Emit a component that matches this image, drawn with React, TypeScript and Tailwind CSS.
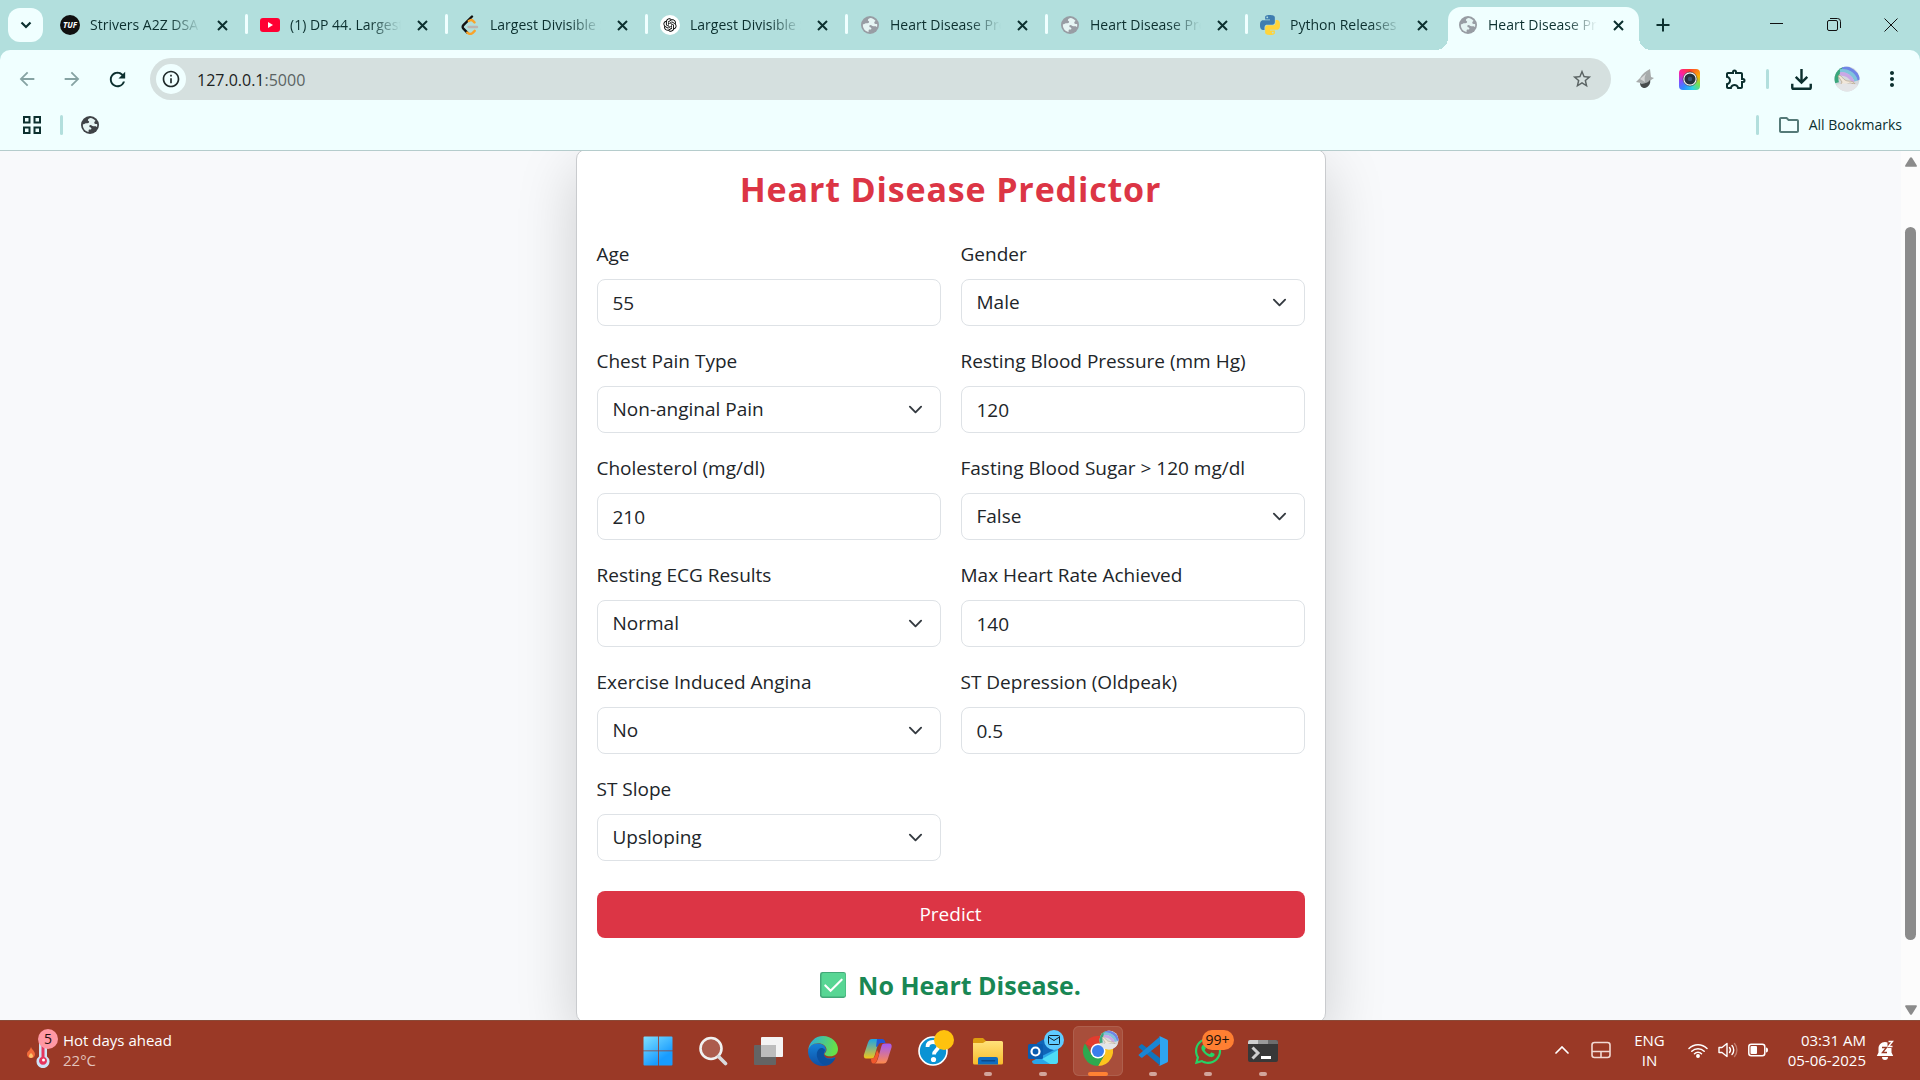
import React from "react";
import { MdOutlineExtension, MdArrowBack, MdArrowForward, MdRefresh, MdOutlineInfo, MdStarBorder, MdOutlineFolder, MdMoreVert } from "react-icons/md";
import { RiOpenaiFill } from "react-icons/ri";
import { FaWhatsapp } from "react-icons/fa";

type IconProps = { className?: string };

function Globe({ className = "" }: IconProps) {
  return (
    <svg viewBox="0 0 18 18" className={className} aria-hidden="true">
      <circle cx="9" cy="9" r="9" fill="currentColor" />
      <path
        className="fill-[#e6f5f4]"
        d="M9.6 1.9c-1 .3-3 1.200-2.700 2.300.2.700 1 .6 1.200 1.400.2.900-.6 1.700-1.700 1.700H4.700c-.9 0-1 .9-1.900.9h-.9c-.3 2.600.7 4.900 2.700 6.500.9.600 1.900 1.100 3 1.300v-1.600c0-.5.5-.8 1-.8h.8c.9 0 1.300-1.100.8-1.700-.6-.7-1.200-.5-1.700-1.200-.6-.9.100-1.700 1.100-1.700 1.200 0 1.500 1.300 2.800 1.300h1.900c.9 0 1 .8 1.700.7.3-.9.300-1.900.1-2.900h-1.500c-1 0-1.400-.8-1.300-1.500.1-.8.800-1.300 1.200-1.900-1.300-1.500-3-2.500-4.900-2.800z"
      />
    </svg>
  );
}

function PythonIcon() {
  const half =
    "M14.25.18l.9.2.73.26.59.3.45.32.34.34.25.34.16.33.1.3.04.26.02.2-.01.13V8.5l-.05.63-.13.55-.21.46-.26.38-.3.31-.33.25-.35.19-.35.14-.33.1-.3.07-.26.04-.21.02H8.77l-.69.05-.59.14-.5.22-.41.27-.33.32-.27.35-.2.36-.15.37-.1.35-.07.32-.04.27-.02.21v3.06H3.17l-.21-.03-.28-.07-.32-.12-.35-.18-.36-.26-.36-.36-.35-.46-.32-.59-.28-.73-.21-.88-.14-1.05-.05-1.23.06-1.22.16-1.04.24-.87.32-.71.36-.57.4-.44.42-.33.42-.24.4-.16.36-.1.32-.05.24-.01h.16l.06.01h8.16v-.83H6.18l-.01-2.75-.02-.37.05-.34.11-.31.17-.28.25-.26.31-.23.38-.2.44-.18.51-.15.58-.12.64-.1.71-.06.77-.04.84-.02 1.27.05zm-6.3 1.98l-.23.33-.08.41.08.41.23.34.33.22.41.09.41-.09.33-.22.23-.34.08-.41-.08-.41-.23-.33-.33-.22-.41-.09-.41.09z";
  return (
    <svg viewBox="0 0 24 24" className="size-5" aria-hidden="true">
      <path d={half} fill="#3f7db0" />
      <path d={half} fill="#ffd43b" transform="rotate(180 12 12)" />
    </svg>
  );
}

function LeetCodeIcon() {
  return (
    <svg viewBox="0 0 20 20" className="size-5" fill="none" strokeLinecap="round" strokeLinejoin="round" strokeWidth="2.400" aria-hidden="true">
      <path d="M12 1.500 3.400 10.200c-1 1-1 2.400 0 3.400l3.900 4" stroke="#111" />
      <path d="m8.800 6 1.500-.8c1-.3 2 0 2.700.7l1.500 1.500M7.300 17.600c1.800 1.500 4 1.500 5.400.2l2-2" stroke="#f9a42b" />
      <path d="M8.500 12H17" stroke="#bdb5b1" />
    </svg>
  );
}

function TufIcon() {
  return (
    <span className="flex size-5 items-center justify-center rounded-full bg-[#101010] text-[8px] leading-none font-bold text-white italic">
      TUF
    </span>
  );
}

function YoutubeIcon() {
  return (
    <svg viewBox="0 0 20 20" className="size-5" aria-hidden="true">
      <rect y="3" width="20" height="14" rx="3" fill="#ff0033" />
      <path d="m8 7 5 3-5 3z" fill="#fff" />
    </svg>
  );
}

function OpenAiIcon() {
  return (
    <span className="flex size-5 items-center justify-center rounded-full bg-white text-black">
      <RiOpenaiFill className="size-4" />
    </span>
  );
}

const pageGlobe = <Globe className="size-[18px] text-[#989da4]" />;

const tabs = [
  { title: "Strivers A2Z DSA Course", icon: <TufIcon /> },
  { title: "(1) DP 44. Largest Divisible", icon: <YoutubeIcon /> },
  { title: "Largest Divisible Subset", icon: <LeetCodeIcon /> },
  { title: "Largest Divisible Subset", icon: <OpenAiIcon /> },
  { title: "Heart Disease Predictor", icon: pageGlobe },
  { title: "Heart Disease Predictor", icon: pageGlobe },
  { title: "Python Releases for", icon: <PythonIcon /> },
  { title: "Heart Disease Predictor", icon: pageGlobe, active: true },
];

function TabStrip() {
  return (
    <div className="flex h-[50px] items-start bg-[#b2dfdd] text-[#0c302f]">
      <button aria-label="Search tabs" className="mt-2 ml-2 flex h-[34px] w-[35px] items-center justify-center rounded-xl bg-[#f0ffff]">
        <svg viewBox="0 0 12 12" className="size-3" fill="none" stroke="currentColor" strokeWidth="2.200" aria-hidden="true">
          <path d="m1.500 3.500 4.500 4.500 4.500-4.500" />
        </svg>
      </button>
      <div className="ml-[5px] flex min-w-0" role="tablist">
        {tabs.map((tab, i) => (
          <div
            key={i}
            role="tab"
            aria-selected={!!tab.active}
            className={
              tab.active
                ? "relative mt-[7px] flex h-[43px] w-[191px] items-center rounded-t-[13px] bg-[#f0ffff] pr-3 pb-[7px] pl-[10px]"
                : "relative mt-[7px] flex h-[43px] w-[200px] items-center pr-[17px] pb-[7px] pl-3"
            }
          >
            <span className="flex w-5 shrink-0 justify-center">{tab.icon}</span>
            <span className="ml-[10px] flex-1 overflow-hidden text-sm whitespace-nowrap [mask-image:linear-gradient(to_right,#000_72%,transparent)]">
              {tab.title}
            </span>
            <button aria-label={"Close " + tab.title} className="ml-[13px] flex w-[17px] shrink-0 justify-center">
              <svg viewBox="0 0 11 11" className="size-[11px]" stroke="currentColor" strokeWidth="2" aria-hidden="true">
                <path d="m1 1 9 9m0-9-9 9" />
              </svg>
            </button>
            {!tab.active && i < 6 && <span className="absolute top-[7px] right-0 h-5 w-[3px] rounded bg-[#f0ffff]" />}
            {tab.active && (
              <>
                <span className="absolute bottom-0 -left-3 size-3 bg-[radial-gradient(circle_at_0_0,transparent_12px,#f0ffff_12px)]" />
                <span className="absolute -right-3 bottom-0 size-3 bg-[radial-gradient(circle_at_100%_0,transparent_12px,#f0ffff_12px)]" />
              </>
            )}
          </div>
        ))}
      </div>
      <button aria-label="New tab" className="mt-[18px] ml-[17px]">
        <svg viewBox="0 0 14 14" className="size-[14px]" stroke="currentColor" strokeWidth="2" aria-hidden="true">
          <path d="M7 .500v13M.500 7h13" />
        </svg>
      </button>
      <div className="mt-[15px] mr-[22px] ml-auto flex items-center gap-[43px] text-[#111]">
        <button aria-label="Minimize">
          <svg viewBox="0 0 14 20" className="h-5 w-[14px]" aria-hidden="true"><path d="M0 8.500h13" stroke="currentColor" /></svg>
        </button>
        <button aria-label="Restore">
          <svg viewBox="0 0 14 20" className="h-5 w-[14px]" fill="none" stroke="currentColor" aria-hidden="true">
            <rect x=".5" y="5.500" width="10" height="10" rx="1.500" />
            <path d="M3 3.500h7.500a3 3 0 0 1 3 3V13" />
          </svg>
        </button>
        <button aria-label="Close window">
          <svg viewBox="0 0 14 20" className="h-5 w-[14px]" stroke="currentColor" aria-hidden="true"><path d="m.5 3.500 13 13m0-13-13 13" /></svg>
        </button>
      </div>
    </div>
  );
}

function Avatar({ className = "" }: IconProps) {
  return (
    <svg viewBox="0 0 26 26" className={className} aria-hidden="true">
      <clipPath id="avatarClip"><circle cx="13" cy="13" r="12.500" /></clipPath>
      <g clipPath="url(#avatarClip)">
        <rect width="26" height="26" fill="#d5d9de" />
        <g fill="none" strokeWidth="3.600">
          <path d="M2 17C0 9 4 4 9 2" stroke="#3aa77c" strokeWidth="6" />
          <path d="M8 2a16 16 0 0 1 17 12" stroke="#6f86e6" />
          <path d="M6 5a14 14 0 0 1 16 10" stroke="#7fc4dc" />
          <path d="M6 8a12 12 0 0 1 13 8" stroke="#c9a8e6" />
        </g>
        <path d="M4 10c3-2 4 2 7 4s8 0 10 4l-5-1-5 2-5 1 2-4z" fill="#f1e7da" stroke="#b9a992" strokeWidth=".8" />
        <path d="M2 19c6-2 15-2 22 0v7H2z" fill="#e4e5e7" />
      </g>
    </svg>
  );
}

function Toolbar() {
  return (
    <div className="bg-[#b2dfdd]">
      <div className="flex h-[100px] flex-col rounded-t-[10px] bg-[#f0ffff] text-[#0c302f]">
        <div className="mt-2 flex h-[42px] items-center">
          <div className="ml-4 flex items-center gap-[23px]">
            <button aria-label="Back" className="text-[#86a3a3]"><MdArrowBack className="size-[22px]" /></button>
            <button aria-label="Forward" className="text-[#86a3a3]"><MdArrowForward className="size-[22px]" /></button>
            <button aria-label="Reload"><MdRefresh className="size-[23px]" /></button>
          </div>
          <div className="ml-[21px] flex h-[42px] flex-1 items-center rounded-full bg-[#d5e0df] pr-[18px] pl-[6px]">
            <button aria-label="View site information" className="flex size-[30px] items-center justify-center rounded-full bg-[#f0ffff] text-[#1f2a2a]">
              <MdOutlineInfo className="size-5" />
            </button>
            <span className="ml-[11px] flex-1 pt-px font-['Open_Sans'] text-base text-[#1c2222]">
              127.0.0.1<span className="text-[#5a6363]">:5000</span>
            </span>
            <button aria-label="Bookmark this tab" className="text-[#5b6464]"><MdStarBorder className="size-[22px]" /></button>
          </div>
          <div className="mr-4 ml-6 flex items-center">
            <button aria-label="Extension one">
              <svg viewBox="0 0 20 20" className="size-5" aria-hidden="true">
                <path d="M15 0c-4 2-8 5-10 9l-4 4 5 1c3 1 8 0 10-3l3-2-3-1z" fill="#a7abab" />
                <path d="M13 3c-3 2-4 6-3 10l-5-3z" fill="#d5d7d7" />
                <path d="M5 14c2 1 7 1 10-3 1 3-1 7-5 8-3 0-5-2-5-5z" fill="#474b4b" />
              </svg>
            </button>
            <button aria-label="Extension two" className="ml-6">
              <span className="flex size-[21px] items-center justify-center rounded bg-[conic-gradient(#ff3b30,#ffb300_20%,#7be04a_32%,#2ad4e8_45%,#2f8bff_60%,#8a4bff_72%,#ff1fa0_85%,#ff3b30)]">
                <svg viewBox="0 0 16 16" className="size-4" aria-hidden="true">
                  <circle cx="8" cy="8" r="7" fill="#fff" stroke="#222c38" strokeWidth=".6" />
                  <circle cx="8" cy="8" r="5.600" fill="#26303c" />
                  <circle cx="8" cy="8" r="2.200" fill="#3b5675" />
                </svg>
              </span>
            </button>
            <button aria-label="Extensions" className="ml-6"><MdOutlineExtension className="size-6" /></button>
            <span className="ml-[18px] h-5 w-[3px] rounded bg-[#b2dfdd]" />
            <button aria-label="Downloads" className="ml-[22px]">
              <svg viewBox="0 0 20 20" className="size-[21px]" fill="none" stroke="currentColor" strokeWidth="2.300" aria-hidden="true">
                <path d="M10 0v12.500M4.500 7.500l5.500 5.500 5.500-5.500M1.200 14v3.500c0 .8.500 1.300 1.300 1.300h15c.8 0 1.300-.5 1.300-1.300V14" />
              </svg>
            </button>
            <button aria-label="Profile" className="ml-[22px]"><Avatar className="size-[26px]" /></button>
            <button aria-label="Menu" className="ml-5"><MdMoreVert className="size-6" /></button>
          </div>
        </div>
        <div className="flex h-[49px] items-center">
          <button aria-label="Apps" className="ml-[23px]">
            <svg viewBox="0 0 18 18" className="size-[18px]" fill="none" stroke="currentColor" strokeWidth="2" aria-hidden="true">
              <rect x="1" y="1" width="5.500" height="5.500" /><rect x="11.500" y="1" width="5.500" height="5.500" />
              <rect x="1" y="11.500" width="5.500" height="5.500" /><rect x="11.500" y="11.500" width="5.500" height="5.500" />
            </svg>
          </button>
          <span className="ml-[19px] h-5 w-[3px] rounded bg-[#b2dfdd]" />
          <button aria-label="Bookmark" className="ml-[18px]"><Globe className="size-[18px] text-[#3f4347]" /></button>
          <span className="ml-auto h-5 w-[3px] rounded bg-[#b2dfdd]" />
          <button className="mr-[18px] ml-[18px] flex items-center gap-2 text-sm">
            <MdOutlineFolder className="size-6 text-[#557a78]" />
            All Bookmarks
          </button>
        </div>
      </div>
    </div>
  );
}

type Field = { id: string; label: string; value: string; options?: string[] };

const fields: Field[] = [
  { id: "age", label: "Age", value: "55" },
  { id: "sex", label: "Gender", value: "Male", options: ["Male", "Female"] },
  { id: "cp", label: "Chest Pain Type", value: "Non-anginal Pain", options: ["Typical Angina", "Atypical Angina", "Non-anginal Pain", "Asymptomatic"] },
  { id: "trestbps", label: "Resting Blood Pressure (mm Hg)", value: "120" },
  { id: "chol", label: "Cholesterol (mg/dl)", value: "210" },
  { id: "fbs", label: "Fasting Blood Sugar > 120 mg/dl", value: "False", options: ["False", "True"] },
  { id: "restecg", label: "Resting ECG Results", value: "Normal", options: ["Normal", "ST-T Abnormality"] },
  { id: "thalach", label: "Max Heart Rate Achieved", value: "140" },
  { id: "exang", label: "Exercise Induced Angina", value: "No", options: ["No", "Yes"] },
  { id: "oldpeak", label: "ST Depression (Oldpeak)", value: "0.5" },
  { id: "slope", label: "ST Slope", value: "Upsloping", options: ["Upsloping", "Flat", "Downsloping"] },
];

function FormField({ id, label, value, options }: Field) {
  const box = "block h-[47px] w-full appearance-none rounded-lg border border-[#dee2e6] bg-white px-[15px]";
  return (
    <div>
      <label htmlFor={id} className="mb-[10px] block leading-[30px]">{label}</label>
      {options ? (
        <div className="relative">
          <select id={id} defaultValue={value} className={box}>
            {options.map((o) => <option key={o}>{o}</option>)}
          </select>
          <svg viewBox="0 0 16 16" className="pointer-events-none absolute top-4 right-[18px] size-[15px]" fill="none" stroke="#343a40" strokeWidth="2" strokeLinecap="round" strokeLinejoin="round" aria-hidden="true">
            <path d="m2 5 6 6 6-6" />
          </svg>
        </div>
      ) : (
        <input id={id} defaultValue={value} className={box} />
      )}
    </div>
  );
}

function Page() {
  return (
    <main className="flex min-h-0 flex-1 border-t border-[#b5cccc] bg-[#f8f9fb]">
      <div className="min-w-0 flex-1 overflow-hidden">
        <form
          onSubmit={(e) => e.preventDefault()}
          className="mx-auto -mt-0.5 max-w-[750px] rounded-[10px] border border-[#c9cbce] bg-white px-5 pt-5 pb-[22px] font-['Open_Sans'] text-[19px] text-[#212529] shadow-[0_20px_60px_rgba(0,0,0,0.175)]"
        >
          <h1 className="mb-[31px] text-center text-[34px] leading-[38px] font-bold tracking-wide text-[#dc3545]">Heart Disease Predictor</h1>
          <div className="grid grid-cols-2 gap-5">
            {fields.map((f) => <FormField key={f.id} {...f} />)}
          </div>
          <button className="mt-[30px] block h-[47px] w-full rounded-lg bg-[#dc3545] text-white">Predict</button>
          <p className="mt-8 flex items-center justify-center gap-3 text-[25px] leading-[30px] font-bold text-[#198754]">
            <svg viewBox="0 0 27 27" className="size-[26px]" aria-hidden="true">
              <rect width="27" height="27" rx="2.500" fill="#43a878" />
              <rect x="1.500" y="1" width="25" height="24.500" rx="2" fill="#58d694" />
              <path d="m5.500 14 5.500 5.500L22.500 8" fill="none" stroke="#fff" strokeWidth="2.200" strokeLinecap="round" />
            </svg>
            No Heart Disease.
          </p>
        </form>
      </div>
      <div className="flex w-[19px] flex-col items-center bg-[#fcfcfc] pt-1.5 pb-[5px]" aria-hidden="true">
        <svg viewBox="0 0 12 10" className="h-[10px] w-3" fill="#8b8b8b"><path d="M5 .8c.5-.8 1.500-.8 2 0l4.700 7.400c.5.900.1 1.600-.9 1.600H1.200c-1 0-1.400-.7-.9-1.600z" /></svg>
        <span className="mt-[60px] mb-[65px] w-[11px] flex-1 rounded-full bg-[#8b8b8b]" />
        <svg viewBox="0 0 12 10" className="h-[10px] w-3 rotate-180" fill="#8b8b8b"><path d="M5 .8c.5-.8 1.500-.8 2 0l4.700 7.400c.5.900.1 1.600-.9 1.600H1.200c-1 0-1.400-.7-.9-1.600z" /></svg>
      </div>
    </main>
  );
}

function Gradient({ id, from, to, angle = 90 }: { id: string; from: string; to: string; angle?: number }) {
  return (
    <linearGradient id={id} gradientTransform={`rotate(${angle})`}>
      <stop stopColor={from} />
      <stop offset="1" stopColor={to} />
    </linearGradient>
  );
}

const apps: { name: string; running?: boolean; active?: boolean; icon: React.ReactNode; badge?: React.ReactNode }[] = [
  {
    name: "Start",
    icon: (
      <>
        <Gradient id="gWin" from="#7fe0ff" to="#189cff" angle={55} />
        <path fill="url(#gWin)" d="M1.500.5h13.700v14H.5v-13a1 1 0 0 1 1-1zM16 .5h12.500a1 1 0 0 1 1 1v13H16zM.5 15.300h14.700v14.200H1.500a1 1 0 0 1-1-1zM16 15.300h13.500v13.200a1 1 0 0 1-1 1H16z" />
      </>
    ),
  },
  {
    name: "Search",
    icon: (
      <>
        <circle cx="13" cy="12.500" r="10.500" fill="#fff" fillOpacity=".18" stroke="#f1f1f1" strokeWidth="2.600" />
        <path d="m20.500 20.500 7 7" stroke="#d9dadd" strokeWidth="3.600" strokeLinecap="round" />
      </>
    ),
  },
  {
    name: "Task View",
    icon: (
      <>
        <rect x="1" y="9" width="22" height="20" rx="1" fill="#646464" />
        <rect x="8" y="1" width="22" height="20" rx="1" fill="#f4f4f4" />
        <path d="M8 9h15v12H8z" fill="#bdbdbd" />
      </>
    ),
  },
  {
    name: "Edge",
    icon: (
      <>
        <Gradient id="gEdge" from="#26a8e8" to="#66e04a" angle={12} />
        <Gradient id="gEdgeB" from="#1582d8" to="#0f4fa4" />
        <path fill="url(#gEdgeB)" d="M0 15C1 9 6 7 11 7.500c4 .4 7 3 7 6.500 0 2-2 2.500-2 4.500 0 3 4 4.500 8 3.500 1.500-.4 2.600-1 3-.8.500.4 0 1.200-.5 2A15 15 0 0 1 15 30C7 30 0 24 0 15z" />
        <path fill="#0b4f9e" d="M11 13c-3 3-3 8 0 12 2 3 5 4.500 8 4.400 4-1 7-4 8.400-7.500-5 2.500-10 1-11.400-2.400-.9-2.400.7-4 1-5.500-2-2.500-4-2.500-6-1z" />
        <path fill="url(#gEdge)" d="M0 15C1 6 7 0 15 0c9 0 15 7 15 13 0 5-3.500 7.300-7.500 7.300-3 0-6-.9-6-2.300 0-1 2-1.500 2-4.500 0-3.600-4-6.300-8.500-6.300C5 7.200 1 10 0 15z" />
      </>
    ),
  },
  {
    name: "Copilot",
    icon: (
      <>
        <Gradient id="gCopA" from="#1aa5e8" to="#f3c518" />
        <Gradient id="gCopB" from="#a259f7" to="#ff8a4c" />
        <path fill="url(#gCopA)" d="M9 3h10c-2 0-3 2-4 5l-3.500 12c-.6 2-1.500 2.500-3 2.500H3c-2 0-2.500-2-2-4L5 6.500C6 4 7 3 9 3z" />
        <path fill="#2156d8" d="M14 3h5c2 0 3 1.500 3.500 4h-4c-2 0-3 1-3.500 3l-2 1z" />
        <path fill="url(#gCopB)" d="M21.500 7.500H26c2.500 0 3 2 2.500 4l-4 12.500c-1 2.500-2 3.500-4 3.500H11c2 0 3-2 4-5l3.500-12.500c.5-1.700 1.500-2.500 3-2.500z" />
        <path fill="#f1582c" d="M8 22.500h1c1.500 0 2.500-1 3-2.500l2-6 2 4-2 6c-.8 2-1.500 3.500-3.500 3.500S8 25.500 8 22.500z" />
      </>
    ),
  },
  {
    name: "Get Help",
    icon: (
      <>
        <circle cx="15" cy="15" r="14" fill="#0a93d4" stroke="#fff" strokeWidth="1.600" />
        <path d="M9.500 11c0-3.500 2.500-5 5.500-5s5.500 1.800 5.500 4.500c0 3.500-4.500 4-4.500 8" fill="none" stroke="#fff" strokeWidth="3.800" />
        <circle cx="15.500" cy="23.500" r="2.600" fill="#fff" />
      </>
    ),
    badge: <span className="block size-5 rounded-full bg-[#ffc20e]" />,
  },
  {
    name: "File Explorer",
    running: true,
    icon: (
      <>
        <Gradient id="gFold" from="#ffe27a" to="#f8bc2c" />
        <path fill="#dd9c0f" d="M0 4a2 2 0 0 1 2-2h8l3 3v4H0z" />
        <path fill="url(#gFold)" d="M0 7h10l3-2h15.500A1.500 1.500 0 0 1 30 6.500V27a1.500 1.500 0 0 1-1.500 1.500h-27A1.500 1.500 0 0 1 0 27z" />
        <path fill="#0f6cc0" d="M5 28.500V23a2 2 0 0 1 2-2h16a2 2 0 0 1 2 2v5.500z" />
        <path d="M9 24.700h12.500" stroke="#0b4a8c" strokeWidth="1.600" strokeLinecap="round" />
      </>
    ),
  },
  {
    name: "Outlook",
    running: true,
    icon: (
      <>
        <path fill="#1066b8" d="M9 7 20 1l10 7v9L17 25 6 20z" />
        <path fill="#2ba6e8" d="M30 12v13a3 3 0 0 1-3 3H7a3 3 0 0 1-3-3z" />
        <path fill="#4fdcf7" d="m30 14-16 9 8 5h5a3 3 0 0 0 3-3z" />
        <rect y="8" width="15" height="15" rx="1.500" fill="#0a5cb0" />
        <circle cx="7.500" cy="15.500" r="4" fill="none" stroke="#fff" strokeWidth="2.200" />
      </>
    ),
    badge: (
      <span className="flex size-5 items-center justify-center rounded-full bg-[#5fcbff]">
        <svg viewBox="0 0 12 10" className="h-[10px] w-3" fill="none" stroke="#13202b" aria-hidden="true">
          <rect x=".5" y=".5" width="11" height="9" rx="1" /><path d="m.5 2 5.500 3.500L11.500 2" />
        </svg>
      </span>
    ),
  },
  {
    name: "Google Chrome",
    running: true,
    active: true,
    icon: (
      <>
        <path fill="#e33b2e" d="M15 15 2 7.500A15 15 0 0 1 28 7.500H15z" />
        <path fill="#fcc31e" d="M28 7.500A15 15 0 0 1 15 30l6.500-11.200L15 7.500z" />
        <path fill="#2da94f" d="M2 7.500 8.500 18.800 15 22.500l3-.6L15 30A15 15 0 0 1 2 7.500z" />
        <path fill="#2da94f" d="m8.500 18.800 13 0L15 30z" />
        <circle cx="15" cy="15" r="7.500" fill="#fff" />
        <circle cx="15" cy="15" r="6" fill="#3b7ded" />
      </>
    ),
    badge: <Avatar className="size-5" />,
  },
  {
    name: "Visual Studio Code",
    running: true,
    icon: (
      <>
        <path fill="#0f75bd" d="M1 10.200 3 8.600c.5-.4 1-.4 1.500 0L22 22v7.500L.9 11.500c-.5-.4-.4-.9.1-1.300z" />
        <path fill="#1a86d4" d="m1 19.800 2 1.600c.5.400 1 .4 1.500 0L22 8V.500L.9 18.500c-.5.400-.4.900.1 1.300z" />
        <path fill="#2fa4f0" d="m22 .3 7 3.200c.6.300 1 .8 1 1.500v20c0 .7-.4 1.200-1 1.500l-7 3.200c-.8.300-1.200.1-1.800-.5 1 .6 1.800.2 1.800-1V1.800c0-1.200-.8-1.600-1.800-1 .6-.6 1-.8 1.800-.5z" />
      </>
    ),
  },
  {
    name: "WhatsApp",
    running: true,
    icon: <FaWhatsapp size={30} color="#25d366" />,
    badge: <span className="-ml-[7px] flex h-5 items-center rounded-full bg-[#ff7f32] px-1 text-sm leading-none text-[#1c0f08]">99+</span>,
  },
  {
    name: "Terminal",
    running: true,
    icon: (
      <>
        <rect y="4" width="30" height="22" rx="2" fill="#383838" />
        <path d="M0 8V6a2 2 0 0 1 2-2h8v4z" fill="#d0d0d0" />
        <path d="M10 4h10v4H10z" fill="#9a9a9a" />
        <path d="M20 4h8a2 2 0 0 1 2 2v2H20z" fill="#6d6d6d" />
        <path d="m4.500 11.500 5.500 5.500-5.500 5.500" fill="none" stroke="#cfcfcf" strokeWidth="3" />
        <path d="M13 21.500h10" stroke="#fff" strokeWidth="3" />
      </>
    ),
  },
];

function Taskbar() {
  return (
    <footer className="grid h-[60px] grid-cols-[1fr_auto_1fr] border-t border-[#8a4a38] bg-[#9a3926] text-white">
      <button className="flex items-center justify-self-start pb-[2px] pl-[26px] text-left text-[15px] leading-5">
        <span className="relative mr-[9px]">
          <svg viewBox="0 0 28 36" className="h-9 w-7" aria-hidden="true">
            <path d="M5 15c1 3 4 4 4 7.500A4 4 0 0 1 5 26c-3 0-4-2-4-4 0-3 3-3 4-7z" fill="#f26b3a" />
            <path d="M5 21c1 1 2 2 2 3s-1 2-2 2-2-1-2-2 1-2 2-3z" fill="#ffc36b" />
            <path d="M13 8a4 4 0 0 1 8 0v16.500a6.500 6.500 0 1 1-8 0z" fill="#cfe4f7" />
            <path d="M15.500 10h3v15a4 4 0 1 1-3 0z" fill="#e5365e" />
            <circle cx="17.500" cy="28" r="1.500" fill="#fff" />
          </svg>
          <span className="absolute -top-[3px] left-3 flex size-5 items-center justify-center rounded-full bg-[#ff98a4] text-sm leading-none text-[#251010]">5</span>
        </span>
        <span>
          <span className="block">Hot days ahead</span>
          <span className="block text-[#e2c3bc]">22°C</span>
        </span>
      </button>
      <nav className="flex items-center gap-[5px]" aria-label="Taskbar">
        {apps.map((app) => (
          <button
            key={app.name}
            aria-label={app.name}
            className={
              app.active
                ? "relative flex h-[50px] w-[50px] flex-col items-center justify-center rounded-md bg-[#a84e3b] ring-1 ring-[#ae5f4d] ring-inset"
                : "relative flex h-[50px] w-[50px] flex-col items-center justify-center rounded-md"
            }
          >
            <svg viewBox="0 0 30 30" className="size-[30px]" aria-hidden="true">{app.icon}</svg>
            {app.badge && <span className="absolute top-1 left-[26px]">{app.badge}</span>}
            {app.running && (
              <span className={app.active ? "absolute bottom-0 h-1 w-5 rounded-full bg-[#ff8133]" : "absolute bottom-0 h-1 w-2 rounded-full bg-[#d2a59b]"} />
            )}
          </button>
        ))}
      </nav>
      <div className="flex items-center justify-self-end pr-[26px] pb-[2px] text-[15px] leading-5">
        <button aria-label="Show hidden icons">
          <svg viewBox="0 0 14 8" className="h-2 w-[14px]" fill="none" stroke="#fff" strokeWidth="1.700" strokeLinecap="round" aria-hidden="true"><path d="m1 7 6-6 6 6" /></svg>
        </button>
        <button aria-label="Touchpad" className="ml-[22px]">
          <svg viewBox="0 0 20 18" className="h-[18px] w-5" fill="none" stroke="#f2d9d3" strokeWidth="1.600" aria-hidden="true">
            <rect x="1" y="1.500" width="18" height="15" rx="2.500" /><path d="M1 10.500h18M10 10.500v6" />
          </svg>
        </button>
        <button className="ml-[23px] text-center"><span className="block">ENG</span><span className="block">IN</span></button>
        <button aria-label="Wi-Fi" className="ml-[23px]">
          <svg viewBox="0 0 20 16" className="h-4 w-5" fill="none" stroke="#fff" strokeWidth="1.500" strokeLinecap="round" aria-hidden="true">
            <path d="M1 6.500a12.700 12.700 0 0 1 18 0M3.800 9.200a8.800 8.800 0 0 1 12.400 0M6.500 11.800a5 5 0 0 1 7 0" /><circle cx="10" cy="14" r="1.200" fill="#fff" />
          </svg>
        </button>
        <button aria-label="Volume" className="ml-[10px]">
          <svg viewBox="0 0 20 18" className="h-[18px] w-5" fill="none" stroke="#fff" strokeWidth="1.400" strokeLinecap="round" strokeLinejoin="round" aria-hidden="true">
            <path d="M1 6.500h3L9 2.500v13l-5-4H1zM11.500 6.500c1.200 1.500 1.200 3.500 0 5M14 4.500c2.300 2.500 2.300 6.500 0 9" /><path d="M16.500 2.500c3.200 3.500 3.200 9.500 0 13" stroke="#c07a6b" />
          </svg>
        </button>
        <button aria-label="Battery" className="ml-[10px]">
          <svg viewBox="0 0 20 14" className="h-[14px] w-5" aria-hidden="true">
            <rect x=".8" y="1.300" width="16" height="11.400" rx="2.500" fill="none" stroke="#fff" strokeWidth="1.500" />
            <rect x="2.500" y="3" width="6.500" height="8" rx="1" fill="#fff" /><path d="M18 4.500c1.500 0 2 1 2 2.500s-.5 2.500-2 2.500z" fill="#fff" />
          </svg>
        </button>
        <button className="ml-[20px] text-right"><span className="block">03:31 AM</span><span className="block">05-06-2025</span></button>
        <button aria-label="Notifications" className="ml-[10px]">
          <svg viewBox="0 0 18 20" className="h-5 w-[18px]" aria-hidden="true">
            <path d="M9 2C5 2 2.500 5 2.500 8.500v4L.8 16h16.400l-1.700-3.500v-4C15.500 5 13 2 9 2zM6 17a3 3 0 0 0 6 0z" fill="#fff" />
            <path d="M11.500 0H18v8h-6.500z" fill="#9a3926" />
            <path d="M6 7.500h4.500L6.500 12.500H11" fill="none" stroke="#9a3926" strokeWidth="1.400" />
            <path d="M12.500 1.500h4l-4 5h4" fill="none" stroke="#fff" strokeWidth="1.400" />
          </svg>
        </button>
      </div>
    </footer>
  );
}

export default function App() {
  return (
    <div className="flex h-screen flex-col overflow-hidden font-['Open_Sans',sans-serif]">
      <TabStrip />
      <Toolbar />
      <Page />
      <Taskbar />
    </div>
  );
}
